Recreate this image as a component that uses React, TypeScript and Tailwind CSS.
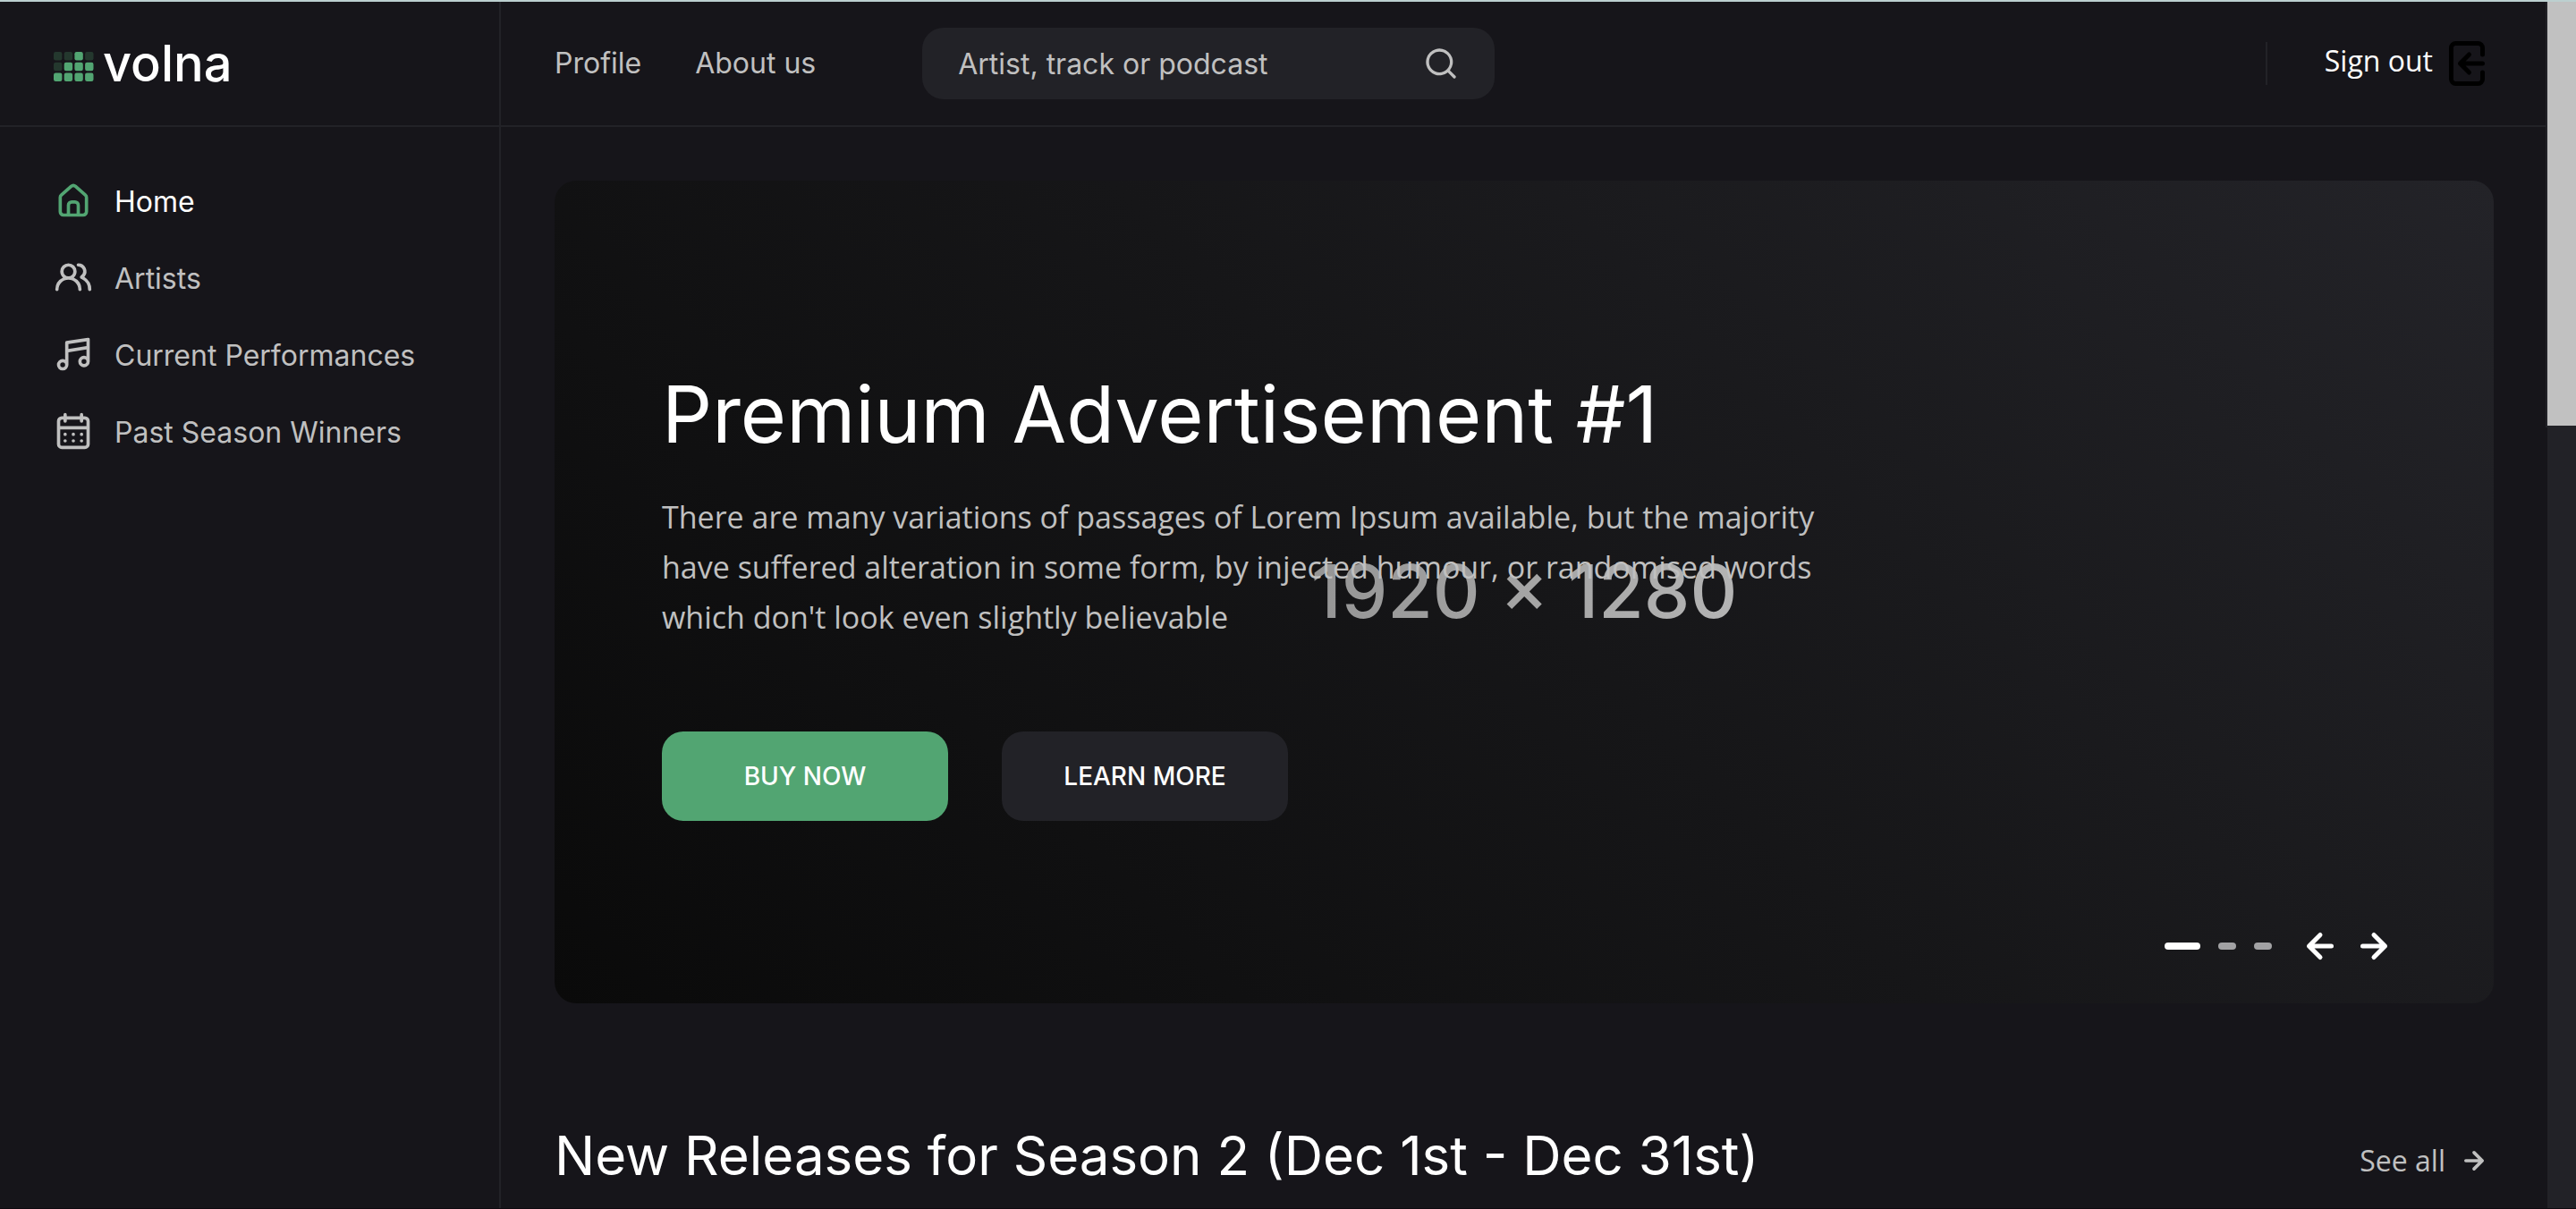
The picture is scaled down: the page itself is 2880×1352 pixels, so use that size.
import type { ReactNode } from "react";

const ICONS = {
  home: "M20,8h0L14,2.74a3,3,0,0,0-4,0L4,8a3,3,0,0,0-1,2.26V19a3,3,0,0,0,3,3H18a3,3,0,0,0,3-3V10.25A3,3,0,0,0,20,8ZM14,20H10V15a1,1,0,0,1,1-1h2a1,1,0,0,1,1,1Zm5-1a1,1,0,0,1-1,1H16V15a3,3,0,0,0-3-3H11a3,3,0,0,0-3,3v5H6a1,1,0,0,1-1-1V10.25a1,1,0,0,1,.34-.75l6-5.25a1,1,0,0,1,1.32,0l6,5.25a1,1,0,0,1,.34.75Z",
  artists:
    "M12.3,12.22A4.92,4.92,0,0,0,14,8.5a5,5,0,0,0-10,0,4.92,4.92,0,0,0,1.7,3.72A8,8,0,0,0,1,19.5a1,1,0,0,0,2,0,6,6,0,0,1,12,0,1,1,0,0,0,2,0A8,8,0,0,0,12.3,12.22ZM9,11.5a3,3,0,1,1,3-3A3,3,0,0,1,9,11.5Zm9.74.32A5,5,0,0,0,15,3.5a1,1,0,0,0,0,2,3,3,0,0,1,3,3,3,3,0,0,1-1.5,2.59,1,1,0,0,0-.5.84,1,1,0,0,0,.45.86l.39.26.13.07a7,7,0,0,1,4,6.38,1,1,0,0,0,2,0A9,9,0,0,0,18.74,11.82Z",
  music:
    "M21.65,2.24a1,1,0,0,0-.8-.23l-13,2A1,1,0,0,0,7,5V15.35A3.45,3.45,0,0,0,5.5,15,3.5,3.5,0,1,0,9,18.5V10.86L20,9.17v4.18A3.45,3.45,0,0,0,18.5,13,3.5,3.5,0,1,0,22,16.5V3A1,1,0,0,0,21.65,2.24ZM5.5,20A1.5,1.5,0,1,1,7,18.5,1.5,1.5,0,0,1,5.5,20Zm13-2A1.5,1.5,0,1,1,20,16.5,1.5,1.5,0,0,1,18.5,18ZM20,7.14,9,8.83v-3L20,4.17Z",
  calendar:
    "M12,19a1,1,0,1,0-1-1A1,1,0,0,0,12,19Zm5,0a1,1,0,1,0-1-1A1,1,0,0,0,17,19Zm0-4a1,1,0,1,0-1-1A1,1,0,0,0,17,15Zm-5,0a1,1,0,1,0-1-1A1,1,0,0,0,12,15ZM19,3H18V2a1,1,0,0,0-2,0V3H8V2A1,1,0,0,0,6,2V3H5A3,3,0,0,0,2,6V20a3,3,0,0,0,3,3H19a3,3,0,0,0,3-3V6A3,3,0,0,0,19,3Zm1,17a1,1,0,0,1-1,1H5a1,1,0,0,1-1-1V11H20ZM20,9H4V6A1,1,0,0,1,5,5H6V6A1,1,0,0,0,8,6V5h8V6a1,1,0,0,0,2,0V5h1a1,1,0,0,1,1,1ZM7,15a1,1,0,1,0-1-1A1,1,0,0,0,7,15Zm0,4a1,1,0,1,0-1-1A1,1,0,0,0,7,19Z",
  search:
    "M21.71,20.29,18,16.61A9,9,0,1,0,16.61,18l3.68,3.68a1,1,0,0,0,1.42,0A1,1,0,0,0,21.71,20.29ZM11,18a7,7,0,1,1,7-7A7,7,0,0,1,11,18Z",
  signOut:
    "M20,12a1,1,0,0,1-1,1H11.41l2.3,2.29a1,1,0,0,1,0,1.42,1,1,0,0,1-1.42,0l-4-4a1,1,0,0,1-.21-.33,1,1,0,0,1,0-.76,1,1,0,0,1,.21-.33l4-4a1,1,0,1,1,1.42,1.42L11.41,11H19A1,1,0,0,1,20,12ZM7,2H17a3,3,0,0,1,3,3V8a1,1,0,0,1-2,0V5a1,1,0,0,0-1-1H7A1,1,0,0,0,6,5V19a1,1,0,0,0,1,1H17a1,1,0,0,0,1-1V16a1,1,0,0,1,2,0v3a3,3,0,0,1-3,3H7a3,3,0,0,1-3-3V5A3,3,0,0,1,7,2Z",
  arrowLeft:
    "M17,11H9.41l3.3-3.29a1,1,0,1,0-1.42-1.42l-5,5a1,1,0,0,0-.21.33,1,1,0,0,0,0,.76,1,1,0,0,0,.21.33l5,5a1,1,0,0,0,1.42,0,1,1,0,0,0,0-1.42L9.41,13H17a1,1,0,0,0,0-2Z",
  arrowRight:
    "M17.92,11.62a1,1,0,0,0-.21-.33l-5-5a1,1,0,0,0-1.42,1.42L14.59,11H7a1,1,0,0,0,0,2h7.59l-3.3,3.29a1,1,0,0,0,0,1.42,1,1,0,0,0,1.42,0l5-5a1,1,0,0,0,.21-.33A1,1,0,0,0,17.92,11.62Z",
};

type IconName = keyof typeof ICONS;

function Icon({ name, className }: { name: IconName; className: string }) {
  return (
    <svg viewBox="0 0 24 24" fill="currentColor" aria-hidden="true" className={className}>
      <path d={ICONS[name]} />
    </svg>
  );
}

const LOGO_ROWS = [
  [0, 0, 1, 0],
  [0, 1, 1, 1],
  [1, 1, 1, 1],
];

function Logo() {
  return (
    <a href="#home" className="flex items-baseline gap-2.5">
      <svg viewBox="0 0 45 33" aria-hidden="true" className="h-[33px] w-[45px]">
        {LOGO_ROWS.map((row, y) =>
          row.map((on, x) => (
            <rect
              key={`${x}-${y}`}
              x={x * 11.7}
              y={y * 11.8}
              width="9.4"
              height="9.4"
              rx="2.2"
              fill={on ? "#52a572" : "#24382e"}
            />
          )),
        )}
      </svg>
      <span className="text-[56px] leading-none font-medium text-white">volna</span>
    </a>
  );
}

const NAV: { icon: IconName; label: string; active?: boolean }[] = [
  { icon: "home", label: "Home", active: true },
  { icon: "artists", label: "Artists" },
  { icon: "music", label: "Current Performances" },
  { icon: "calendar", label: "Past Season Winners" },
];

function Sidebar() {
  return (
    <aside className="w-[560px] shrink-0 border-r-2 border-[#222227] px-[60px] pt-[60px]">
      <nav className="flex flex-col gap-[42px]">
        {NAV.map(({ icon, label, active }) => (
          <a
            key={label}
            href={`#${icon}`}
            className={
              active
                ? "flex h-[44px] items-center gap-6 text-white"
                : "flex h-[44px] items-center gap-6 text-[#c0c0c0]"
            }
          >
            <Icon
              name={icon}
              className={active ? "size-[44px] text-[#52a572]" : "size-[44px]"}
            />
            <span className="pt-1 text-[32px] leading-[44px]">{label}</span>
          </a>
        ))}
      </nav>
    </aside>
  );
}

function Header() {
  return (
    <header className="flex h-[140px] shrink-0 border-b-2 border-[#222227]">
      <div className="flex w-[560px] shrink-0 items-center border-r-2 border-[#222227] px-[60px]">
        <Logo />
      </div>
      <div className="flex flex-1 items-center px-[60px]">
        <nav className="flex gap-[60px] text-[32px] leading-[44px] text-[#c0c0c0]">
          <a href="#profile">Profile</a>
          <a href="#about">About us</a>
        </nav>
        <form className="ml-[119px] flex h-20 w-[640px] items-center rounded-3xl bg-[#222227] px-10">
          <input
            type="text"
            aria-label="Search"
            placeholder="Artist, track or podcast"
            className="min-w-0 flex-1 bg-transparent pt-[2px] text-[32px] leading-[44px] text-white outline-none placeholder:text-[#c0c0c0]"
          />
          <button type="button" aria-label="Submit search" className="text-[#c0c0c0]">
            <Icon name="search" className="size-10" />
          </button>
        </form>
        <div className="ml-auto flex items-center">
          <span className="h-12 w-[2px] bg-[#222227]" />
          <a href="#signout" className="ml-16 flex items-center gap-2">
            <span className="pb-1.5 font-['Open_Sans'] text-[32px] leading-[44px] text-white">
              Sign out
            </span>
            <Icon name="signOut" className="size-[60px] text-black" />
          </a>
        </div>
      </div>
    </header>
  );
}

function HeroButton({ className, children }: { className: string; children: ReactNode }) {
  return (
    <button
      type="button"
      className={`h-[100px] w-[320px] rounded-3xl text-[28px] font-medium text-white ${className}`}
    >
      {children}
    </button>
  );
}

function Hero() {
  return (
    <section className="relative min-h-[920px] rounded-3xl bg-[linear-gradient(45deg,#0a0a0a,#161618_50%,#232328)] px-[120px] pt-[213px]">
      <div className="absolute inset-0 flex items-center justify-center">
        <span className="bg-linear-to-r from-[#959595] to-[#b4b4b4] bg-clip-text text-[82px] leading-none font-medium text-transparent">
          1920 × 1280
        </span>
      </div>
      <div className="relative">
        <h1 className="text-[88px] leading-[96px] text-white">Premium Advertisement #1</h1>
        <p className="mt-[39px] max-w-[1300px] font-['Open_Sans'] text-[34px] leading-[56px] text-[#c0c0c0]">
          There are many variations of passages of Lorem Ipsum available, but the majority have
          suffered alteration in some form, by injected humour, or randomised words which don't look
          even slightly believable
        </p>
        <div className="mt-[100px] flex gap-[60px]">
          <HeroButton className="bg-[#52a572]">BUY NOW</HeroButton>
          <HeroButton className="bg-[#222227]">LEARN MORE</HeroButton>
        </div>
      </div>
      <div className="absolute right-[104px] bottom-[34px] flex items-center text-white">
        <div className="mr-6 flex gap-5">
          <button type="button" aria-label="Slide 1" className="h-2 w-10 rounded-full bg-white" />
          <button type="button" aria-label="Slide 2" className="h-2 w-5 rounded-full bg-[#a2a2a4]" />
          <button type="button" aria-label="Slide 3" className="h-2 w-5 rounded-full bg-[#a2a2a4]" />
        </div>
        <button type="button" aria-label="Previous slide">
          <Icon name="arrowLeft" className="size-[60px]" />
        </button>
        <button type="button" aria-label="Next slide">
          <Icon name="arrowRight" className="size-[60px]" />
        </button>
      </div>
    </section>
  );
}

function Releases() {
  return (
    <section className="mt-[134px] flex items-end justify-between">
      <h2 className="text-[60px] leading-[72px] text-white">
        New Releases for Season 2 (Dec 1st - Dec 31st)
      </h2>
      <a href="#releases" className="mb-2 flex items-center gap-2.5 text-[#c0c0c0]">
        <span className="font-['Open_Sans'] text-[32px] leading-[44px]">See all</span>
        <Icon name="arrowRight" className="size-[44px]" />
      </a>
    </section>
  );
}

export default function App() {
  return (
    <div className="flex h-screen flex-col overflow-hidden border-t-2 border-[#bcd0d0] bg-[#16151a] font-['Inter',sans-serif]">
      <div className="flex min-h-0 flex-1">
        <div className="flex min-w-0 flex-1 flex-col">
          <Header />
          <div className="flex min-h-0 flex-1">
            <Sidebar />
            <main className="min-w-0 flex-1 overflow-hidden px-[60px] pt-[60px]">
              <Hero />
              <Releases />
            </main>
          </div>
        </div>
        <div className="w-8 shrink-0 bg-[#222227]">
          <div className="relative -ml-[2px] h-[35.3%] border-b-2 border-l-2 border-[#222227] bg-[#c1c1c1]" />
        </div>
      </div>
      <div className="h-px shrink-0 bg-[#0e0a10]" />
    </div>
  );
}
